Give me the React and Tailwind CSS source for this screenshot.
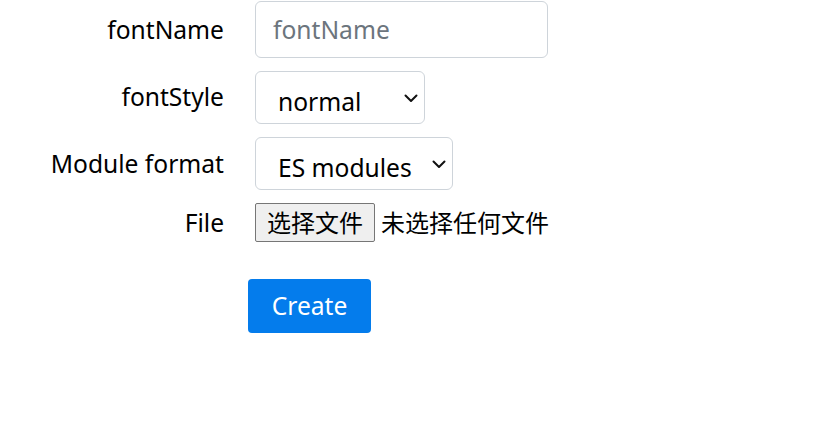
import React from "react";

const font = { fontFamily: '"Noto Sans", "Noto Sans CJK SC", sans-serif' };

function Chevron() {
  return (
    <svg
      className="pointer-events-none absolute right-[7px] top-[23px]"
      width="14"
      height="9"
      viewBox="0 0 14 9"
      fill="none"
      stroke="#111"
      strokeWidth="2"
      strokeLinecap="round"
      strokeLinejoin="round"
    >
      <path d="M1.5 1.5l5.5 5.5 5.5-5.5" />
    </svg>
  );
}

function Select({ value, width }) {
  return (
    <div className={`relative ${width}`}>
      <select
        defaultValue={value}
        className="h-[53px] w-full appearance-none rounded-[6px] border border-[#ced4da] bg-white pl-[22px] pr-[34px] pt-[10px] text-[24.6px] text-black outline-none"
        style={font}
      >
        <option>{value}</option>
      </select>
      <Chevron />
    </div>
  );
}

export default function App() {
  return (
    <div className="min-h-[443px] w-[830px] bg-white pt-[1px] text-[24px] text-black" style={font}>
      <div className="flex flex-col gap-[13px]">
        <div className="flex items-center">
          <label className="w-[224px] text-right text-[24.6px] leading-[36px]">fontName</label>
          <input
            placeholder="fontName"
            className="ml-[31px] h-[57px] w-[293px] rounded-[6px] border border-[#ced4da] px-[17px] text-[24.6px] outline-none placeholder:text-[#6c757d]"
            style={font}
          />
        </div>
        <div className="flex items-center">
          <label className="w-[224px] pb-[1px] text-right text-[24.6px] leading-[36px]">fontStyle</label>
          <div className="ml-[31px]">
            <Select value="normal" width="w-[170px]" />
          </div>
        </div>
        <div className="flex items-center">
          <label className="w-[224px] pt-[1px] text-right text-[24.6px] leading-[36px]">Module format</label>
          <div className="ml-[31px]">
            <Select value="ES modules" width="w-[198px]" />
          </div>
        </div>
        <div className="flex items-center">
          <label className="w-[224px] text-right text-[24.6px] leading-[36px]">File</label>
          <div className="ml-[31px] flex items-center">
            <button className="h-[39px] w-[120px] rounded-[2px] border border-[#767676] bg-[#efefef] text-[24px] leading-none">
              选择文件
            </button>
            <span className="ml-[6px] leading-[36px]">未选择任何文件</span>
          </div>
        </div>
      </div>
      <div className="mt-[37px] pl-[248px]">
        <button className="h-[54px] w-[123px] rounded-[4px] bg-[#047cec] text-[24.6px] text-white">
          Create
        </button>
      </div>
    </div>
  );
}
